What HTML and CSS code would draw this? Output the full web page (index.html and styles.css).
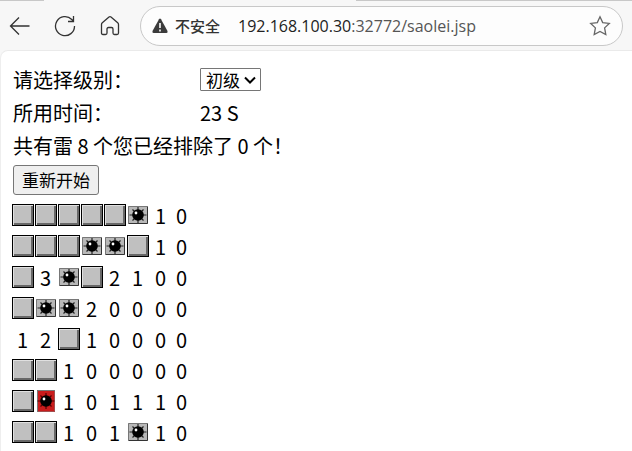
FILE: index.html
```html
<!DOCTYPE html>
<html lang="zh-CN">
<head>
<meta charset="utf-8">
<title>扫雷</title>
<link rel="stylesheet" href="styles.css">
</head>
<body>
<header class="chrome">
  <div class="tabs"><span class="tab-rest"></span><span class="tab-active"></span><span class="tab-fill"></span></div>
  <nav class="toolbar">
    <button class="nav" aria-label="后退"><svg width="22" height="22" viewBox="0 0 22 22"><path d="M20.5 11H1.5M10 2.5L1.5 11L10 19.5"/></svg></button>
    <button class="nav" aria-label="刷新"><svg width="22" height="22" viewBox="0 0 22 22"><path d="M20.5 11A9.5 9.5 0 1 1 17.8 4.5L19.5 6.2M19.5 1v5.5H14"/></svg></button>
    <button class="nav" aria-label="主页"><svg width="22" height="22" viewBox="0 0 22 22"><path d="M2.5 9.5Q2.5 8.5 3.3 7.8L10 2Q11 1.3 12 2L18.700 7.800Q19.500 8.500 19.500 9.500V18Q19.500 19.500 18 19.500H15.500Q14 19.500 14 18V14Q14 12.500 12.500 12.500H9.500Q8 12.500 8 14V18Q8 19.500 6.500 19.500H4Q2.500 19.500 2.500 18Z"/></svg></button>
    <div class="address">
      <svg class="warn" width="16" height="16" viewBox="0 0 16 16"><path d="M7 1.200Q8 0 9 1.200L15.500 13Q16 14.800 14.500 15H1.500Q0 14.800 .5 13Z" fill="#3b3b3b"/><path d="M8 5v5M8 11.500v2" stroke="#fff" stroke-width="1.600"/></svg>
      <span class="insecure">不安全</span>
      <a class="url" href="#board"><span class="host">192.168.100.30</span>:32772/saolei.jsp</a>
      <button class="star" aria-label="收藏"><svg width="22" height="22" viewBox="0 0 22 22"><path d="M11 1.800L13.700 7.600L20.300 8.400L15.600 12.900L16.800 19.600L11 16.400L5.200 19.600L6.400 12.900L1.700 8.400L8.300 7.600Z"/></svg></button>
    </div>
  </nav>
</header>
<main class="page">
  <div class="row">
    <label class="name" for="level">请选择级别：</label>
    <span class="picker"><select id="level"><option>初级</option><option>中级</option><option>高级</option></select><svg class="chevron" width="12" height="8" viewBox="0 0 12 8"><path d="M1 1.500L6 6.500L11 1.500"/></svg></span>
  </div>
  <div class="row"><span class="name">所用时间：</span><span>23 S</span></div>
  <p class="row">共有雷 8 个您已经排除了 0 个！</p>
  <button class="restart">重新开始</button>
  <table class="board" id="board"><tbody></tbody></table>
</main>
<script src="board.js"></script>
</body>
</html>
```
FILE: styles.css
```css
* { box-sizing: border-box; }
body {
  margin: 0;
  background: #f7f7f7;
  color: #000;
  font: 20px/32px "Noto Sans CJK SC", sans-serif;
}
button, select { font-family: inherit; margin: 0; }
svg { display: block; }

.tabs { display: flex; height: 1px; }
.tab-rest { width: 44px; background: #c8c8c8; }
.tab-active { width: 312px; }
.tab-fill { flex: 1; background: #c8c8c8; }
.toolbar {
  display: flex;
  align-items: center;
  height: 49px;
  padding: 0 9px;
}
.nav, .star {
  border: 0;
  padding: 0;
  background: none;
  fill: none;
  stroke: #333;
  stroke-width: 1.3;
}
.nav { margin-right: 23px; }
.star { margin-left: auto; stroke: #666; }
.address {
  display: flex;
  flex: 1;
  align-items: center;
  height: 40px;
  margin-left: -4px;
  padding: 0 11px;
  border: 1px solid #c8c8c8;
  border-radius: 20px;
  background: #fdfdfd;
}
.warn { margin-right: 7px; }
.insecure {
  width: 63px;
  font-size: 15px;
  font-weight: 500;
  color: #333;
}
.url {
  font: 16px/24px "Open Sans", sans-serif;
  color: #555;
  text-decoration: none;
}
.host { color: #222; }

.page {
  padding: 12px 12px 0;
  border-top: 1px solid #eaeaea;
  border-left: 1px solid #eee;
  border-top-left-radius: 8px;
  background: #fff;
  min-height: calc(100vh - 50px);
}
.row { display: flex; align-items: center; margin: 0; min-height: 33px; }
.name { width: 187px; }
.picker { position: relative; }
.picker select {
  display: block;
  appearance: none;
  width: 61px;
  height: 23px;
  padding: 0 5px;
  border: 1px solid #767676;
  border-radius: 1px;
  background: #fff;
  color: #000;
  font-size: 17px;
  line-height: 20px;
}
.chevron {
  position: absolute;
  right: 5px;
  top: 8px;
  fill: none;
  stroke: #000;
  stroke-width: 2;
  pointer-events: none;
}
.restart {
  display: block;
  width: 86px;
  height: 30px;
  margin-top: 3px;
  padding: 0;
  border: 1px solid #767676;
  border-radius: 3px;
  background: #efefef;
  color: #000;
  font-size: 17px;
  line-height: 24px;
}
.board {
  margin-top: 5px;
  margin-left: -2px;
  border-collapse: collapse;
  table-layout: fixed;
  width: 180px;
}
.board td {
  width: 23px;
  height: 31px;
  padding: 0;
  line-height: 31px;
  text-align: center;
}
.board td:last-child { width: 19px; }
.tile, .mine { display: block; margin: 0 auto 2px; }
.tile {
  width: 22px;
  height: 22px;
  padding: 0;
  border: 1px solid #000;
  background: #c0c0c0;
  box-shadow: inset 1px 1px #e0e0e0, inset -2px -2px #686868;
}
```
FILE: board.js
```js
// "#" covered, "*" mine, "X" the mine that was hit
const rows = ["#####*10", "###**#10", "#3*#2100", "#**20000", "12#10000", "##100000", "#X101110", "##101*10"];

function mine(hit) {
  const w = hit ? 18 : 20;
  const h = hit ? 22 : 18;
  return `<svg class="mine" width="${w}" height="${h}" viewBox="0 0 ${w} ${h}">
    <rect width="${w}" height="${h}" fill="${hit ? "#c91c1c" : "#b8b8b8"}"/>
    <path d="M.5 ${h}V.5H${w}" fill="none" stroke="#777"/>
    <path d="M${w - .5} 1V${h - .5}H1" fill="none" stroke="${hit ? "#a05050" : "#333"}"/>
    <g transform="translate(${w / 2} ${h / 2})">
      <path d="M-8.500 0H8.500M0-8V8M-5.500-5.500L5.500 5.500M5.500-5.500L-5.500 5.500" stroke="${hit ? "#500" : "#222"}" stroke-width="1.200"/>
      <circle r="5.800"/><circle cx="-2" cy="-2" r="1.400" fill="#fff"/>
    </g></svg>`;
}

document.querySelector(".board tbody").innerHTML = rows.map(row =>
  "<tr>" + [...row].map(c => {
    if (c === "#") return '<td><button class="tile" aria-label="未翻开"></button></td>';
    if (c === "*" || c === "X") return `<td>${mine(c === "X")}</td>`;
    return `<td>${c}</td>`;
  }).join("") + "</tr>").join("");
```
